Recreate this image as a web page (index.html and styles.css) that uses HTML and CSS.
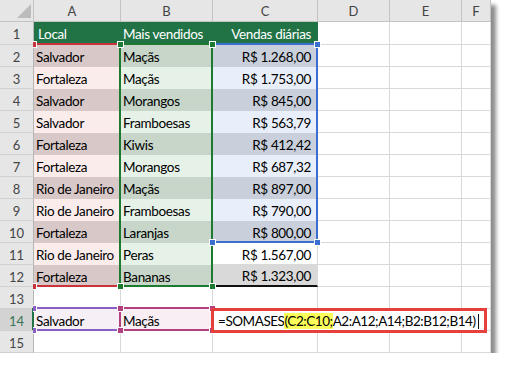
FILE: index.html
```html
<!DOCTYPE html>
<html lang="pt-BR">
<head>
<meta charset="utf-8">
<title>SOMASES</title>
<link rel="stylesheet" href="styles.css">
</head>
<body>
<div class="sheet">
  <div class="grid">
    <div class="corner"><svg width="33" height="21" viewBox="0 0 33 21"><polygon points="31,4 31,18 17,18" fill="#bcbcbc"/></svg></div>
    <div class="ch ch-a">A</div><div class="ch">B</div><div class="ch">C</div><div class="ch">D</div><div class="ch">E</div><div class="ch">F</div>

    <div class="rh">1</div><div class="c hd hd-a">Local</div><div class="c hd">Mais vendidos</div><div class="c hd num">Vendas diárias</div><div class="c"></div><div class="c"></div><div class="c"></div>
    <div class="rh">2</div><div class="c a-d">Salvador</div><div class="c b-d">Maçãs</div><div class="c c-d num">R$ 1.268,00</div><div class="c"></div><div class="c"></div><div class="c"></div>
    <div class="rh">3</div><div class="c a-l">Fortaleza</div><div class="c b-l">Maçãs</div><div class="c c-l num">R$ 1.753,00</div><div class="c"></div><div class="c"></div><div class="c"></div>
    <div class="rh">4</div><div class="c a-d">Salvador</div><div class="c b-d">Morangos</div><div class="c c-d num">R$ 845,00</div><div class="c"></div><div class="c"></div><div class="c"></div>
    <div class="rh">5</div><div class="c a-l">Salvador</div><div class="c b-l">Framboesas</div><div class="c c-l num">R$ 563,79</div><div class="c"></div><div class="c"></div><div class="c"></div>
    <div class="rh">6</div><div class="c a-d">Fortaleza</div><div class="c b-d">Kiwis</div><div class="c c-d num">R$ 412,42</div><div class="c"></div><div class="c"></div><div class="c"></div>
    <div class="rh">7</div><div class="c a-l">Fortaleza</div><div class="c b-l">Morangos</div><div class="c c-l num">R$ 687,32</div><div class="c"></div><div class="c"></div><div class="c"></div>
    <div class="rh">8</div><div class="c a-d">Rio de Janeiro</div><div class="c b-d">Maçãs</div><div class="c c-d num">R$ 897,00</div><div class="c"></div><div class="c"></div><div class="c"></div>
    <div class="rh">9</div><div class="c a-l">Rio de Janeiro</div><div class="c b-l">Framboesas</div><div class="c c-l num">R$ 790,00</div><div class="c"></div><div class="c"></div><div class="c"></div>
    <div class="rh">10</div><div class="c a-d">Fortaleza</div><div class="c b-d">Laranjas</div><div class="c c-d num">R$ 800,00</div><div class="c"></div><div class="c"></div><div class="c"></div>
    <div class="rh">11</div><div class="c a-l">Rio de Janeiro</div><div class="c b-l">Peras</div><div class="c num">R$ 1.567,00</div><div class="c"></div><div class="c"></div><div class="c"></div>
    <div class="rh">12</div><div class="c a-d">Fortaleza</div><div class="c b-d">Bananas</div><div class="c c-g num">R$ 1.323,00</div><div class="c"></div><div class="c"></div><div class="c"></div>
    <div class="rh">13</div><div class="c"></div><div class="c"></div><div class="c"></div><div class="c"></div><div class="c"></div><div class="c"></div>
    <div class="rh rh-sel">14</div><div class="c p-a">Salvador</div><div class="c p-b">Maçãs</div><div class="c"></div><div class="c"></div><div class="c"></div><div class="c"></div>
    <div class="rh">15</div><div class="c"></div><div class="c"></div><div class="c"></div><div class="c"></div><div class="c"></div><div class="c"></div>
  </div>

  <div class="rng rng-red"></div>
  <div class="rng rng-blue"></div>
  <div class="rng rng-green"></div>
  <div class="rng rng-purple"></div>
  <div class="rng rng-mag"></div>
  <div class="rowmark"></div>

  <span class="h h-red h-r1"></span>
  <span class="h h-red h-r2"></span>
  <span class="h h-blue h-b1"></span>
  <span class="h h-blue h-b2"></span>
  <span class="h h-blue h-b3"></span>
  <span class="h h-green h-g1"></span>
  <span class="h h-green h-g2"></span>
  <span class="h h-green h-g3"></span>
  <span class="h h-green h-g4"></span>
  <span class="h h-purple h-p1"></span>
  <span class="h h-purple h-p2"></span>
  <span class="h h-mag h-m1"></span>
  <span class="h h-mag h-m2"></span>
  <span class="h h-mag h-m3"></span>
  <span class="h h-mag h-m4"></span>

  <div class="editor">=SOMASES<span class="hl">(C2:C10;</span>A2:A12;A14;B2:B12;B14)<span class="caret"></span></div>

  <div class="marks">
    <span class="mk mk1"></span><span class="mk mk2"></span><span class="mk mk3"></span><span class="mk mk4"></span><span class="mk mk5"></span><span class="mk mk6"></span>
  </div>
</div>
</body>
</html>
```
FILE: styles.css
```css
html, body {
  margin: 0;
  padding: 0;
  background: #ffffff;
}

body {
  font-family: "Lato", "Liberation Sans", sans-serif;
  font-size: 13.5px;
  letter-spacing: -0.35px;
  color: #000;
}

.sheet {
  position: relative;
  width: 491px;
  height: 353px;
  box-shadow: 5px 5px 4px rgba(0, 0, 0, 0.45);
  background: #fff;
}

.grid {
  display: grid;
  grid-template-columns: 34px 87px 92px 105px 72px 72px 29px;
  grid-template-rows: 22px 23px repeat(14, 22px);
}

.corner,
.ch,
.rh {
  background: #e6e6e6;
  border-right: 1px solid #c3c3c3;
  border-bottom: 1px solid #c3c3c3;
  box-sizing: border-box;
  color: #444;
  font-size: 13px;
  letter-spacing: 0;
  display: flex;
  align-items: center;
  justify-content: center;
}

.corner {
  justify-content: flex-start;
  align-items: flex-start;
}

.ch {
  padding-top: 1px;
}

.ch-a {
  padding-right: 10px;
}

.rh {
  border-right-color: #b5b5b5;
  border-bottom-color: #d0d0d0;
  padding-top: 2px;
}

.rh-sel {
  background: #d3d3d3;
  color: #3a7355;
}

.c {
  border-right: 1px solid #d9d9d9;
  border-bottom: 1px solid #d9d9d9;
  box-sizing: border-box;
  display: flex;
  align-items: center;
  padding: 2px 2px 0 2px;
  white-space: nowrap;
  overflow: hidden;
}

.num {
  justify-content: flex-end;
  padding-right: 6px;
}

.hd {
  background: #217346;
  color: #fff;
  border-color: transparent;
}

.hd-a {
  padding-left: 4px;
}

.a-d { background: #d9c8c8; border-color: transparent; }
.a-l { background: #fbecec; border-color: transparent; }
.b-d { background: #c7d6c8; border-color: transparent; }
.b-l { background: #e6f2e7; border-color: transparent; }
.c-d { background: #c9d0dc; border-color: transparent; }
.c-l { background: #e9effa; border-color: transparent; }
.c-g { background: #d9d9d9; border-right-color: transparent; border-bottom: 2px solid #111; }
.p-a { background: #f6eff5; }
.p-b { background: #f8eef3; }

/* range highlight boxes */
.rng {
  position: absolute;
  box-sizing: border-box;
}

.rng-red {
  left: 33px;
  top: 43px;
  width: 88px;
  height: 244px;
  border-top: 2px solid #c9343b;
  border-bottom: 2px solid #c9343b;
}

.rng-blue {
  left: 211px;
  top: 43px;
  width: 107px;
  height: 200px;
  border: 2px solid #3a6fcf;
}

.rng-green {
  left: 119px;
  top: 43px;
  width: 94px;
  height: 244px;
  border: 2px solid #1c7a31;
}

.rng-purple {
  left: 33px;
  top: 307px;
  width: 88px;
  height: 24px;
  border-top: 2px solid #8a5fc3;
  border-bottom: 2px solid #8a5fc3;
  border-right: 2px solid #8a5fc3;
}

.rng-mag {
  left: 119px;
  top: 307px;
  width: 94px;
  height: 24px;
  border: 2px solid #b4417f;
}

.rowmark {
  position: absolute;
  left: 32px;
  top: 308px;
  width: 2px;
  height: 22px;
  background: #217346;
}

/* handles */
.h {
  position: absolute;
  width: 5px;
  height: 5px;
  border: 1px solid #fff;
}

.h-red { background: #c9343b; }
.h-blue { background: #3a6fcf; }
.h-green { background: #1c7a31; }
.h-purple { background: #8a5fc3; }
.h-mag { background: #b4417f; }

.h-r1 { left: 33px; top: 41px; width: 3px; border-left: 0; }
.h-r2 { left: 33px; top: 283px; width: 3px; border-left: 0; }

.h-b1 { left: 314px; top: 41px; }
.h-b2 { left: 209px; top: 239px; }
.h-b3 { left: 314px; top: 239px; }

.h-g1 { left: 117px; top: 41px; }
.h-g2 { left: 209px; top: 41px; }
.h-g3 { left: 117px; top: 283px; }
.h-g4 { left: 209px; top: 283px; }

.h-p1 { left: 33px; top: 305px; width: 3px; border-left: 0; }
.h-p2 { left: 33px; top: 327px; width: 3px; border-left: 0; }

.h-m1 { left: 117px; top: 305px; }
.h-m2 { left: 117px; top: 327px; }
.h-m3 { left: 209px; top: 305px; }
.h-m4 { left: 209px; top: 327px; }

/* in-cell editor */
.editor {
  position: absolute;
  left: 211px;
  top: 308px;
  width: 276px;
  height: 25px;
  box-sizing: border-box;
  border: 3px solid #e6403d;
  background: #fff;
  padding: 1px 0 0 4px;
  display: flex;
  align-items: center;
  white-space: nowrap;
  letter-spacing: -0.45px;
  color: #000;
}

.hl {
  background: #ffff5a;
}

.caret {
  display: inline-block;
  width: 1px;
  height: 15px;
  background: #111;
  margin-left: 2px;
}

/* bits of scrollbar peeking below the shadow */
.marks {
  position: absolute;
  left: 0;
  top: 353px;
  width: 491px;
  height: 5px;
}

.mk {
  position: absolute;
  top: 0;
  height: 4px;
  background: #5a5a5a;
}

.mk1 { left: 96px; width: 6px; }
.mk2 { left: 115px; width: 5px; }
.mk3 { left: 208px; width: 12px; }
.mk4 { left: 229px; width: 10px; }
.mk5 { left: 302px; width: 6px; }
.mk6 { left: 470px; width: 10px; }
```
